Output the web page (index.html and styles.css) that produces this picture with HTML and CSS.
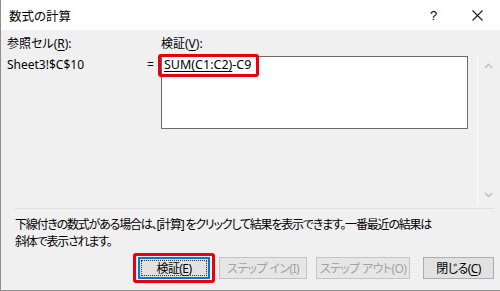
FILE: index.html
```html
<!DOCTYPE html>
<html lang="ja">
<head>
<meta charset="utf-8">
<link rel="stylesheet" href="styles.css">
</head>
<body>
<div class="window">
  <div class="titlebar">
    <div class="title">数式の計算</div>
    <div class="help">?</div>
    <div class="close">
      <svg width="11" height="11" viewBox="0 0 11 11"><path d="M0.5 0.5 L10.5 10.5 M10.5 0.5 L0.5 10.5" stroke="#1a1a1a" stroke-width="1.1" fill="none"/></svg>
    </div>
  </div>
  <div class="body">
    <div class="main">
      <div class="label">参照セル(<u>R</u>):</div>
      <div></div>
      <div class="label">検証(<u>V</u>):</div>
      <div></div>
      <div></div>
      <div class="ref">Sheet3!$C$10</div>
      <div class="eq">=</div>
      <div class="box">
        <span class="formula"><u>SUM(C1:C2)</u>-C9</span>
        <span class="mark mark-formula"></span>
      </div>
      <div></div>
      <div class="scroll">
        <svg class="chev" width="9" height="6" viewBox="0 0 9 6"><path d="M1 5 L4.5 1.5 L8 5" stroke="#c2c2c2" stroke-width="1.6" fill="none"/></svg>
        <svg class="chev" width="9" height="6" viewBox="0 0 9 6"><path d="M1 1 L4.5 4.5 L8 1" stroke="#c2c2c2" stroke-width="1.6" fill="none"/></svg>
      </div>
    </div>
    <div class="sep"></div>
    <p class="msg">下線付きの数式がある場合は、[計算] をクリックして結果を表示できます。一番最近の結果は<br>斜体で表示されます。</p>
    <div class="buttons">
      <div class="btn focus">検証(<u>E</u>)<span class="mark mark-btn"></span></div>
      <div class="btn disabled b2">ステップ イン(I)</div>
      <div class="btn disabled b3">ステップ アウト(O)</div>
      <div class="btn b4">閉じる(<u>C</u>)</div>
    </div>
  </div>
</div>
</body>
</html>
```

FILE: styles.css
```css
html, body {
  margin: 0;
  padding: 0;
  background: #f0f0f0;
}
body {
  font-family: "Noto Sans", "Noto Sans CJK JP", sans-serif;
  font-size: 12px;
  color: #000;
  font-feature-settings: "palt";
}
u { text-decoration-thickness: 1px; text-underline-offset: 2px; }
.window {
  width: 500px;
  height: 291px;
  box-sizing: border-box;
  border-left: 1px solid #8e8e8e;
  border-bottom: 1px solid #8e8e8e;
  background: #f0f0f0;
  display: flex;
  flex-direction: column;
}
.titlebar {
  height: 30px;
  background: #fff;
  display: flex;
  align-items: center;
  flex-shrink: 0;
}
.title {
  margin-left: 8px;
  font-size: 12.5px;
  flex: 1;
}
.help {
  font-size: 13px;
  width: 8px;
  margin-right: 34px;
  font-family: "Liberation Sans", sans-serif;
}
.close {
  width: 11px;
  height: 11px;
  margin-right: 17px;
  display: flex;
}
.body {
  padding: 6px 0 0 6px;
}
.main {
  display: grid;
  grid-template-columns: 140px 14px 307px 9px 20px;
  grid-template-rows: 20px auto;
}
.label {
  line-height: 16px;
}
.ref {
  padding-top: 1px;
  line-height: 16px;
}
.eq {
  padding-top: 1px;
  line-height: 16px;
}
.box {
  position: relative;
  height: 73px;
  box-sizing: border-box;
  border: 1px solid #6b6b6b;
  background: #fff;
  padding: 0 2px;
  line-height: 16px;
  align-self: start;
}
.formula {
  font-size: 12.5px;
}
.scroll {
  height: 149px;
  border-left: 1px solid #fbfbfb;
  display: flex;
  flex-direction: column;
  justify-content: space-between;
  align-items: center;
  padding: 7px 0 7px 0;
  box-sizing: border-box;
}
.chev { display: block; margin-left: 2px; }
.mark {
  position: absolute;
  border: 3px solid #e8000b;
  border-radius: 3px;
  box-sizing: border-box;
  pointer-events: none;
}
.mark-formula {
  left: -4px;
  top: -3px;
  width: 101px;
  height: 23px;
}
.sep {
  height: 1px;
  background: #dedede;
  margin: 3px 6px 0 8px;
}
.msg {
  margin: 7px 0 0 8px;
  line-height: 17px;
  letter-spacing: -1.2px;
  white-space: nowrap;
}
.buttons {
  display: flex;
  margin: 7px 0 0 131px;
}
.btn {
  position: relative;
  height: 22px;
  box-sizing: border-box;
  border: 1px solid #adadad;
  background: #e1e1e1;
  display: flex;
  align-items: center;
  justify-content: center;
  white-space: nowrap;
  letter-spacing: -0.6px;
}
.btn.focus {
  width: 72px;
  border-color: #0078d7;
  box-shadow: inset 0 0 0 1px #0078d7;
  outline: 1px dotted #333;
  outline-offset: -4px;
}
.btn.disabled {
  background: #e6e6e6;
  border-color: #c4c4c4;
  color: #a3a3a3;
}
.b2 { width: 88px; margin-left: 9px; }
.b3 { width: 94px; margin-left: 9px; }
.b4 { width: 71px; margin-left: 13px; }
.mark-btn {
  left: -6px;
  top: -5px;
  width: 82px;
  height: 30px;
}
```
